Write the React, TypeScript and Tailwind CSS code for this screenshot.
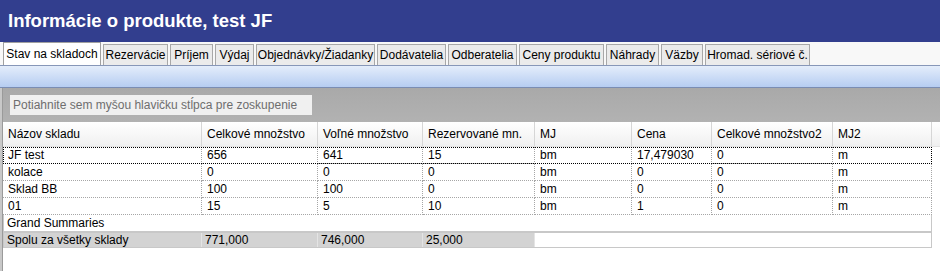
const tabs = [
  { label: 'Stav na skladoch', w: 98, active: true },
  { label: 'Rezervácie', w: 65 },
  { label: 'Príjem', w: 43 },
  { label: 'Výdaj', w: 39 },
  { label: 'Objednávky/Žiadanky', w: 119 },
  { label: 'Dodávatelia', w: 69 },
  { label: 'Odberatelia', w: 69 },
  { label: 'Ceny produktu', w: 85 },
  { label: 'Náhrady', w: 53 },
  { label: 'Väzby', w: 42 },
  { label: 'Hromad. sériové č.', w: 105 },
];

const columns = [
  { label: 'Názov skladu', w: 199 },
  { label: 'Celkové množstvo', w: 116 },
  { label: 'Voľné množstvo', w: 105 },
  { label: 'Rezervované mn.', w: 112 },
  { label: 'MJ', w: 97 },
  { label: 'Cena', w: 80 },
  { label: 'Celkové množstvo2', w: 121 },
  { label: 'MJ2', w: 99 },
];

const rows = [
  ['JF test', '656', '641', '15', 'bm', '17,479030', '0', 'm'],
  ['kolace', '0', '0', '0', 'bm', '0', '0', 'm'],
  ['Sklad BB', '100', '100', '0', 'bm', '0', '0', 'm'],
  ['01', '15', '5', '10', 'bm', '1', '0', 'm'],
];

const totals = ['Spolu za všetky sklady', '771,000', '746,000', '25,000'];

export default function App() {
  return (
    <div className="w-[940px] h-[271px] overflow-hidden bg-white text-[12px] text-black font-['Liberation_Sans',Arial,sans-serif] flex flex-col">
      {/* Title */}
      <div className="h-[42px] shrink-0 bg-[#323e8e] flex items-center px-[8px] text-white font-bold text-[18.5px]">
        Informácie o produkte, test JF
      </div>

      {/* Tabs */}
      <div className="h-[23px] shrink-0 bg-[#f8f8f8] flex items-end gap-[2px] pl-[3px]">
        {tabs.map((t) =>
          t.active ? (
            <div
              key={t.label}
              style={{ width: t.w }}
              className="h-[23px] bg-white border border-b-0 border-[#a0a0a0] flex items-center justify-center pb-[1px]"
            >
              {t.label}
            </div>
          ) : (
            <div
              key={t.label}
              style={{ width: t.w }}
              className="h-[21px] bg-[#ebebeb] border border-b-0 border-[#a8a8a8] flex items-center justify-center"
            >
              {t.label}
            </div>
          )
        )}
      </div>

      {/* Blue band */}
      <div className="h-[23px] shrink-0 border-t border-b border-t-[#8797b8] border-b-[#7a8db3] bg-gradient-to-b from-[#e4edfb] to-[#b6cdf1]" />

      <div className="flex flex-1 min-h-0">
        {/* left edge */}
        <div className="w-[3px] shrink-0 border-l-2 border-[#c8c8c8] bg-[#9a9a9a]" />

        <div className="flex-1 flex flex-col">
          {/* Group panel */}
          <div className="h-[34px] shrink-0 bg-gradient-to-b from-[#a9a9a9] to-[#b2b2b2] pt-[7px] pl-[7px]">
            <div className="w-[302px] h-[20px] bg-[#f0f0f0] text-[#6e6e6e] flex items-center pl-[3px]">
              Potiahnite sem myšou hlavičku stĺpca pre zoskupenie
            </div>
          </div>

          {/* Header */}
          <div className="h-[25px] shrink-0 flex bg-gradient-to-b from-white to-[#f0f0f0] border-b border-[#e2e2e2]">
            {columns.map((c) => (
              <div
                key={c.label}
                style={{ width: c.w }}
                className="h-full flex items-center pl-[5px] border-r border-[#d6d6d6]"
              >
                {c.label}
              </div>
            ))}
          </div>

          {/* Rows */}
          {rows.map((r, i) => (
            <div
              key={i}
              className={`h-[17px] shrink-0 flex ${i === 0 ? 'outline-1 outline-dotted outline-black -outline-offset-1' : ''}`}
              style={{ width: 929 }}
            >
              {r.map((v, j) => (
                <div
                  key={j}
                  style={{ width: columns[j].w }}
                  className="h-full flex items-center pl-[5px] border-b border-r border-dotted border-[#a6a6a6] leading-none"
                >
                  {v}
                </div>
              ))}
            </div>
          ))}

          {/* Grand summaries */}
          <div className="w-[929px] h-[17px] shrink-0 flex items-center pl-[3px] border border-t-0 border-[#c8c8c8]">
            Grand Summaries
          </div>
          <div className="w-[929px] h-[16px] shrink-0 flex border border-t-[#c8c8c8] border-[#c8c8c8]">
            {totals.map((v, j) => (
              <div
                key={j}
                style={{ width: columns[j].w - (j === 0 ? 1 : 0) }}
                className="h-full flex items-center pl-[3px] bg-[#d3d3d3] border-r border-[#e4e4e4] last:border-r-0"
              >
                {v}
              </div>
            ))}
            <div className="flex-1 bg-white" />
          </div>
        </div>
      </div>
    </div>
  );
}
